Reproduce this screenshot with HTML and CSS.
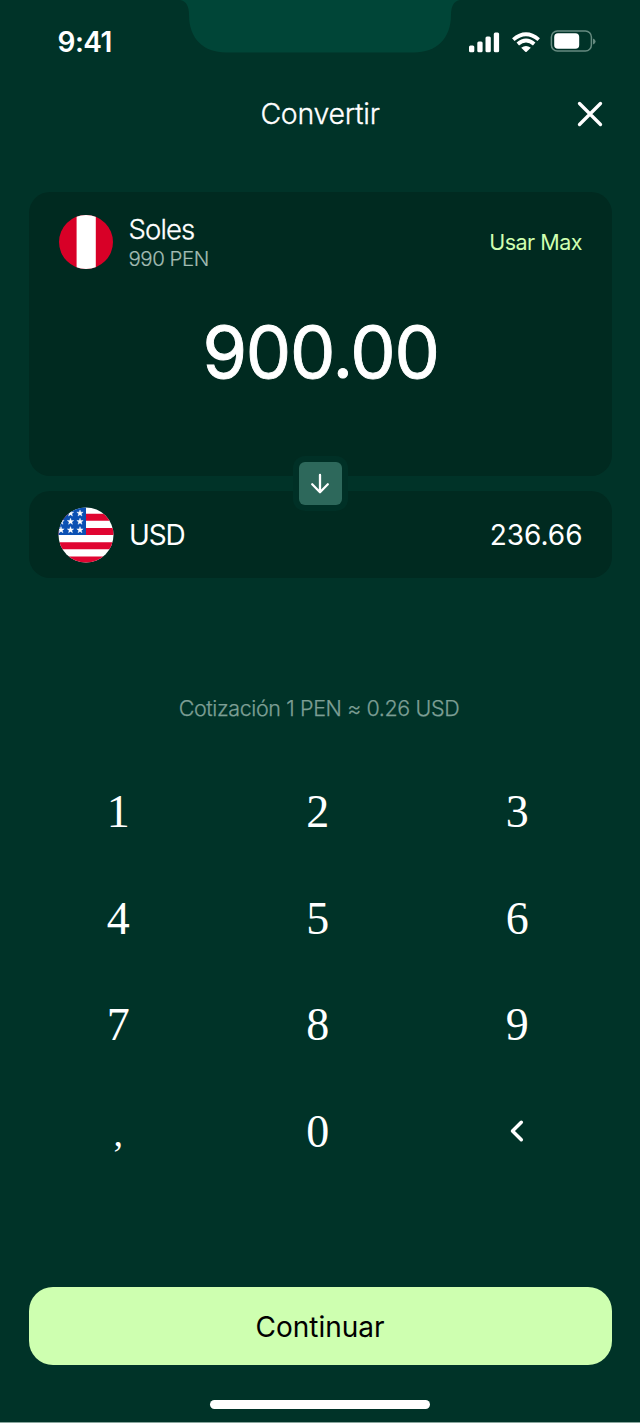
FILE: index.html
```html
<!DOCTYPE html>
<html lang="es">
<head>
<meta charset="utf-8">
<title>Convertir</title>
<link rel="stylesheet" href="styles.css">
</head>
<body>
<main class="screen">
  <div class="status">
    <svg class="notch" width="280" height="54" viewBox="0 0 280 54"><path d="M0 0H280C274 1 271 6 271 15C271 39 256 52.500 234 52.500H46C24 52.500 9 39 9 15C9 6 6 1 0 0Z" fill="#004537"/></svg>
    <time class="clock">9:41</time>
    <svg class="signals" width="128" height="24" viewBox="0 0 128 24">
      <g fill="#fff">
        <rect x="1" y="15.500" width="5.300" height="6.700" rx="1.500"/>
        <rect x="9.300" y="11.500" width="5.300" height="10.700" rx="1.500"/>
        <rect x="17.500" y="6.500" width="5.300" height="15.700" rx="1.500"/>
        <rect x="25.800" y="2.500" width="5.300" height="19.700" rx="1.500"/>
        <path d="M53.200 17.700Q58 14.300 62.800 17.700L58.700 21.800Q58 22.400 57.300 21.800Z"/>
        <rect x="86.200" y="3.200" width="25" height="15.600" rx="3.800"/>
        <path d="M125 8.400V14.600Q127.600 13.500 127.600 11.500T125 8.400Z" fill="#668b80"/>
      </g>
      <g fill="none" stroke="#fff" stroke-width="3.800">
        <path d="M45.300 9.600Q58 -1.200 70.700 9.600"/>
        <path d="M49.800 14Q58 7 66.200 14"/>
      </g>
      <rect x="83.400" y="0.900" width="40" height="20.200" rx="6" fill="none" stroke="#668b80" stroke-width="1.500"/>
    </svg>
  </div>
  <header class="header">
    <h1 class="title">Convertir</h1>
    <svg class="close" width="26" height="26" viewBox="0 0 26 26"><path d="M2.500 2.500L23.500 23.500M23.500 2.500L2.500 23.500" fill="none" stroke="#fff" stroke-width="3.300" stroke-linecap="round"/></svg>
  </header>
  <section class="exchange">
    <div class="card source">
      <div class="row">
        <svg class="flag" width="56" height="56" viewBox="0 0 56 56">
          <clipPath id="pe"><circle cx="28" cy="28" r="27"/></clipPath>
          <g clip-path="url(#pe)"><path d="M0 0H56V56H0Z" fill="#d80027"/><path d="M18.600 0H37.800V56H18.600Z" fill="#fff"/></g>
        </svg>
        <div class="names"><span class="name">Soles</span><span class="balance">990 PEN</span></div>
        <span class="max">Usar Max</span>
      </div>
      <div class="amount">900.00</div>
    </div>
    <div class="card target">
      <svg class="flag" width="56" height="56" viewBox="0 0 56 56">
        <defs>
          <clipPath id="us"><circle cx="28" cy="28" r="27.500"/></clipPath>
          <path id="star" d="M0 -3.400L0.850 -1.100L3.200 -1.100L1.350 0.400L2 2.750L0 1.400L-2 2.750L-1.350 0.400L-3.200 -1.100L-0.850 -1.100Z" fill="#fff" stroke="#fff" stroke-width="0.400"/>
        </defs>
        <g clip-path="url(#us)">
          <path d="M0 0H56V56H0Z" fill="#fff"/>
          <path d="M0 6.800H56V13.800H0ZM0 21H56V28H0ZM0 35.300H56V42.300H0ZM0 49.400H56V56H0Z" fill="#e00531"/>
          <path d="M0 0H28V28H0Z" fill="#0b50b3"/>
          <use href="#star" x="12.500" y="6.300"/><use href="#star" x="22" y="6.300"/>
          <use href="#star" x="3" y="14.600"/><use href="#star" x="12.500" y="14.600"/><use href="#star" x="22" y="14.600"/>
          <use href="#star" x="3" y="23"/><use href="#star" x="12.500" y="23"/><use href="#star" x="22" y="23"/>
        </g>
      </svg>
      <span class="code">USD</span>
      <span class="result">236.66</span>
    </div>
    <div class="swap">
      <svg width="43" height="43" viewBox="0 0 43 43"><path d="M21 13V30M13.200 22.300L21 30.200L28.800 22.300" fill="none" stroke="#fff" stroke-width="2.300" stroke-linecap="round" stroke-linejoin="round"/></svg>
    </div>
  </section>
  <p class="rate">Cotización 1 PEN ≈ 0.26 USD</p>
  <div class="keypad">
    <span class="key">1</span><span class="key">2</span><span class="key">3</span>
    <span class="key">4</span><span class="key">5</span><span class="key">6</span>
    <span class="key">7</span><span class="key">8</span><span class="key">9</span>
    <span class="key comma">,</span><span class="key">0</span>
    <span class="key"><svg width="16" height="24" viewBox="0 0 16 24"><path d="M12.300 3.300L3.500 12L12.300 20.700" fill="none" stroke="#fff" stroke-width="3.500" stroke-linecap="round" stroke-linejoin="round"/></svg></span>
  </div>
  <button class="continue">Continuar</button>
  <div class="home"></div>
</main>
</body>
</html>
```

FILE: styles.css
```css
* { box-sizing: border-box; }
body { margin: 0; background: #003328; }
.screen {
  display: flex;
  flex-direction: column;
  height: 1423px;
  padding: 0 28.5px;
  border-bottom: 1px solid #89a69d;
  background: #003328;
  color: #fff;
  font-family: Inter, "Liberation Sans", sans-serif;
  font-size: 28px;
}
.status {
  position: relative;
  display: flex;
  align-items: center;
  justify-content: space-between;
  height: 84px;
  padding: 0 16px 0 29px;
}
.notch { position: absolute; left: 151.5px; top: 0; }
.clock { font-weight: 600; letter-spacing: -0.5px; }
.header {
  display: flex;
  align-items: center;
  justify-content: flex-end;
  position: relative;
  height: 60px;
  padding-right: 8.5px;
}
.title {
  position: absolute;
  inset: 0;
  margin: 0;
  line-height: 60px;
  text-align: center;
  font-size: 28.5px;
  font-weight: 300;
  letter-spacing: -0.3px;
  -webkit-text-stroke: 0.3px;
}
.exchange {
  position: relative;
  display: flex;
  flex-direction: column;
  gap: 15px;
  margin-top: 48px;
}
.card { border-radius: 21px; background: #002a20; }
.source { height: 284px; padding: 21px 29.5px 0; }
.row { display: flex; align-items: center; height: 58px; }
.flag { flex: none; }
.names { display: flex; flex-direction: column; margin-left: 14.5px; padding-top: 3px; }
.name { line-height: 30px; font-size: 27.500px; font-weight: 300; letter-spacing: -0.9px; -webkit-text-stroke: 0.3px; }
.balance { line-height: 30px; color: #a3bcb3; font-size: 20.500px; font-weight: 300; letter-spacing: -0.5px; -webkit-text-stroke: 0.2px; }
.max { margin-left: auto; color: #cfffb0; font-size: 21.500px; letter-spacing: -0.5px; }
.amount {
  margin-top: 41px;
  padding-left: 1px;
  line-height: 80px;
  text-align: center;
  font-size: 72px;
  letter-spacing: -1.2px;
  -webkit-text-stroke: 0.9px;
}
.target { display: flex; align-items: center; height: 87px; padding: 0 29px 0 29.5px; }
.code { margin-left: 15px; letter-spacing: -1.1px; }
.result { margin-left: auto; }
.swap {
  position: absolute;
  left: 264px;
  top: 264px;
  padding: 6px;
  border-radius: 12px;
  background: #003026;
}
.swap svg { display: block; border-radius: 6px; background: #2d685b; }
.rate {
  margin: 115px 0 0;
  padding-right: 2px;
  line-height: 30px;
  text-align: center;
  color: #7d9f95;
  font-size: 21.500px;
  font-weight: 300;
  letter-spacing: -0.38px;
  -webkit-text-stroke: 0.25px;
}
.keypad {
  display: grid;
  grid-template-columns: repeat(3, 199.5px);
  grid-auto-rows: 106.7px;
  margin: 35px -10px 0;
  font-family: "Liberation Serif", serif;
  font-size: 46px;
}
.key { display: flex; align-items: center; justify-content: center; }
.comma { padding-top: 4px; font-size: 38px; }
.continue {
  height: 78px;
  margin-top: 102px;
  padding: 2px 0 0;
  border: 0;
  border-radius: 24px;
  background: #ceffb0;
  color: #000;
  font: inherit;
}
.home {
  align-self: center;
  width: 220px;
  height: 9px;
  margin-top: 35px;
  border-radius: 5px;
  background: #fff;
}
```
